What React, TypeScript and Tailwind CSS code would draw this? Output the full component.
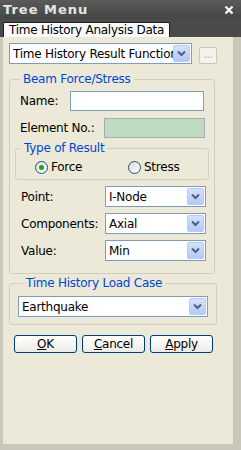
import React from 'react';

/* ------------------------------------------------------------------ */
/*  Tree Menu – Time History Analysis Data panel (XP style)            */
/* ------------------------------------------------------------------ */

const font = { fontFamily: '"DejaVu Sans", "Liberation Sans", sans-serif' };

function Arrow() {
  return (
    <span className="flex h-[17px] w-[17px] shrink-0 items-center justify-center rounded-[2px] bg-gradient-to-b from-[#d6e2fc] to-[#b4c8f6] border border-[#b9cbf3]">
      <svg width="9" height="7" viewBox="0 0 9 7">
        <path d="M1 1.5 L4.5 5 L8 1.5" fill="none" stroke="#4d6185" strokeWidth="2" />
      </svg>
    </span>
  );
}

function Combo({ value, className }: { value: string; className: string }) {
  return (
    <div
      className={`flex h-[21px] items-center overflow-hidden border border-[#7f9db9] bg-white pl-[3px] pr-[1px] ${className}`}
    >
      <span className="flex-1 overflow-hidden whitespace-nowrap text-[12px] text-black">{value}</span>
      <Arrow />
    </div>
  );
}

function Radio({ checked, label }: { checked?: boolean; label: string }) {
  return (
    <label className="flex items-center gap-[3px] text-[12px] text-black">
      <span className="flex h-[13px] w-[13px] items-center justify-center rounded-full border border-[#1c5180] bg-gradient-to-br from-[#dcdcd7] to-white">
        {checked && <span className="h-[5px] w-[5px] rounded-full bg-[#21a121]" />}
      </span>
      {label}
    </label>
  );
}

function Btn({ label, u }: { label: string; u: string }) {
  const rest = label.slice(u.length);
  return (
    <button className="h-[18px] w-[63px] rounded-[3px] border border-[#003c74] bg-gradient-to-b from-white to-[#ecebe6] text-[12px] leading-none text-black">
      <span className="underline">{u}</span>
      {rest}
    </button>
  );
}

export default function App() {
  return (
    <div className="flex h-[450px] w-[241px] flex-col bg-[#ece9d8] tracking-[-0.25px]" style={font}>
      {/* Title bar */}
      <div className="flex h-[19px] items-center justify-between bg-gradient-to-b from-[#5a5a5a] to-[#464646] pl-[3px] pr-[7px]">
        <span className="text-[13px] font-bold tracking-[1px] text-[#e6e6e6]">Tree Menu</span>
        <svg width="10" height="10" viewBox="0 0 10 10">
          <path d="M1.5 1.5 L8.5 8.5 M8.5 1.5 L1.5 8.5" stroke="white" strokeWidth="2.2" />
        </svg>
      </div>

      {/* Tab strip */}
      <div className="flex h-[18px] items-end bg-[#4a4a4a] pl-[3px]">
        <div className="flex h-[15px] items-center rounded-t-[2px] border border-b-0 border-[#1e1e1e] bg-[#fbfbfb] px-[5px] text-[12px] text-black">
          Time History Analysis Data
        </div>
      </div>

      {/* Body */}
      <div className="flex flex-1 flex-col border-b-[6px] border-l-[3px] border-r-[8px] border-[#c9c7ba] bg-[#ece9d8] pl-[6px] pt-[6px]">
        <div className="flex items-center gap-[7px]">
          <Combo value="Time History Result Function" className="w-[183px]" />
          <div className="mt-[3px] flex h-[17px] w-[18px] items-center justify-center rounded-[2px] border border-[#c9c7ba] bg-[#f4f3ee] text-[10px] leading-none text-[#a0a0a0]">
            ...
          </div>
        </div>

        {/* Beam Force/Stress */}
        <fieldset className="mt-[8px] w-[206px] rounded-[3px] border border-[#d0d0bf] px-[5px] pb-[12px]">
          <legend className="ml-[5px] px-[3px] text-[12px] leading-[14px] text-[#0046d5]">Beam Force/Stress</legend>

          <div className="mt-[5px] flex items-center">
            <span className="w-[55px] pl-[5px] text-[12px] text-black">Name:</span>
            <div className="h-[20px] w-[134px] border border-[#7f9db9] bg-white" />
          </div>
          <div className="mt-[7px] flex items-center">
            <span className="w-[89px] pl-[5px] text-[12px] text-black">Element No.:</span>
            <div className="h-[20px] w-[101px] border border-[#a5acb5] bg-[#c0dcc0]" />
          </div>

          <fieldset className="mt-[3px] rounded-[3px] border border-[#d0d0bf] pb-[3px]">
            <legend className="ml-[5px] px-[3px] text-[12px] leading-[14px] text-[#0046d5]">Type of Result</legend>
            <div className="mt-[3px] flex pl-[19px]">
              <div className="w-[93px]">
                <Radio checked label="Force" />
              </div>
              <Radio label="Stress" />
            </div>
          </fieldset>

          <div className="mt-[6px] flex flex-col gap-[6px]">
            {[
              ['Point:', 'I-Node'],
              ['Components:', 'Axial'],
              ['Value:', 'Min'],
            ].map(([l, v]) => (
              <div key={l} className="flex items-center">
                <span className="w-[90px] pl-[6px] text-[12px] text-black">{l}</span>
                <Combo value={v} className="w-[101px]" />
              </div>
            ))}
          </div>
        </fieldset>

        {/* Time History Load Case */}
        <fieldset className="mt-[2px] w-[206px] rounded-[3px] border border-[#d0d0bf] px-[8px] pb-[7px]">
          <legend className="ml-[5px] px-[3px] text-[12px] leading-[14px] text-[#0046d5]">Time History Load Case</legend>
          <Combo value="Earthquake" className="mt-[6px] w-[190px]" />
        </fieldset>

        <div className="mt-[10px] flex gap-[5px] pl-[5px]">
          <Btn label="OK" u="O" />
          <Btn label="Cancel" u="C" />
          <Btn label="Apply" u="A" />
        </div>
      </div>
    </div>
  );
}
